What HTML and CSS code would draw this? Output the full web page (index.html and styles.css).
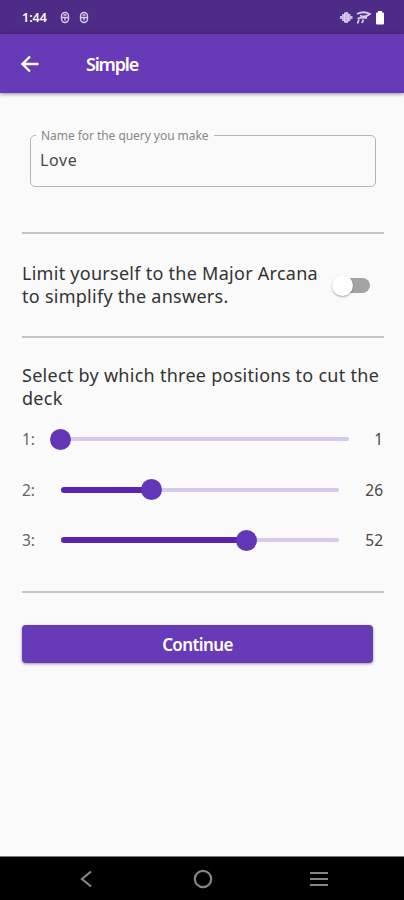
FILE: index.html
```html
<!DOCTYPE html>
<html lang="en">
<head>
<meta charset="utf-8">
<title>Simple</title>
<link rel="stylesheet" href="styles.css">
</head>
<body>
<div class="status">
  <span class="time">1:44</span>
  <svg class="bug" width="10" height="13" viewBox="0 0 10 13"><path d="M1.500 6.500V5a3.500 3.500 0 0 1 7 0V8a3.500 3.500 0 0 1-7 0V6.500h7M5 7v2.500M3.500 4h3"/></svg>
  <svg class="bug" width="10" height="13" viewBox="0 0 10 13"><path d="M1.500 6.500V5a3.500 3.500 0 0 1 7 0V8a3.500 3.500 0 0 1-7 0V6.500h7M5 7v2.500M3.500 4h3"/></svg>
  <svg class="system" width="46" height="17" viewBox="0 0 46 17">
    <path d="M1 7h2V5h2.500V3h3.500v2h2.500v2h2v3h-2v2H9v2H5.500v-2H3v-2H1z" fill="#c5b6dc"/>
    <path d="M5.500 4v9M9 4v9" stroke="#e0d7ec"/>
    <path d="M18 5q6.500-3.500 13 0q-5 4-10 1.500M18.500 9.500q5-1.500 9.500-.5M20 10.500l-1.500 4M24.500 10.500l-1.500 3.500" fill="none" stroke="#d8cde8" stroke-width="1.800"/>
    <path d="M39 2h4v1.500h1q1 0 1 1v10q0 1-1 1h-6q-1 0-1-1v-10q0-1 1-1h1z" fill="#fff"/>
  </svg>
</div>
<header class="appbar">
  <svg width="18" height="18" viewBox="0 0 18 18"><path d="M17.500 9H2M9 1.500L1.500 9L9 16.500"/></svg>
  <h1>Simple</h1>
</header>
<main>
  <fieldset class="field">
    <legend>Name for the query you make</legend>
    <div class="value">Love</div>
  </fieldset>
  <hr>
  <section class="limit">
    <p>Limit yourself to the Major Arcana<br>to simplify the answers.</p>
    <div class="switch"><i></i></div>
  </section>
  <hr>
  <section class="cuts">
    <p>Select by which three positions to cut the<br>deck</p>
    <div class="row"><span class="num">1:</span><div class="track first"><i class="fill" style="width:0%"></i><i class="knob" style="left:0%"></i></div><span class="val">1</span></div>
    <div class="row"><span class="num">2:</span><div class="track"><i class="fill" style="width:32.900%"></i><i class="knob" style="left:32.900%"></i></div><span class="val">26</span></div>
    <div class="row"><span class="num">3:</span><div class="track"><i class="fill" style="width:67%"></i><i class="knob" style="left:67%"></i></div><span class="val">52</span></div>
  </section>
  <hr>
  <button>Continue</button>
</main>
<nav>
  <svg width="12" height="18" viewBox="0 0 12 18"><path d="M11 1.500L2 9l9 7.500"/></svg>
  <svg class="home" width="20" height="20" viewBox="0 0 20 20"><circle cx="10" cy="10" r="8.200"/></svg>
  <svg width="20" height="18" viewBox="0 0 20 18"><path d="M1 3h18M1 9h18M1 15h18"/></svg>
</nav>
</body>
</html>
```
FILE: styles.css
```css
* { box-sizing: border-box; }
body {
  margin: 0;
  height: 900px;
  display: flex;
  flex-direction: column;
  background: #fafafa;
  color: #484848;
  font-family: "Noto Sans", sans-serif;
  overflow: hidden;
}
.status {
  height: 34px;
  flex: none;
  display: flex;
  align-items: center;
  padding: 0 19px 0 22px;
  background: #4d2b87;
  color: #fff;
}
.time { width: 38px; font-size: 12.5px; font-weight: 600; }
.bug { margin-right: 9px; fill: none; stroke: #d8cde8; stroke-width: 1.400; }
.system { margin-left: auto; }
.appbar {
  height: 59px;
  flex: none;
  display: flex;
  align-items: center;
  padding-left: 21px;
  background: #673ab7;
  color: #fff;
  box-shadow: 0 1px 4px rgba(0, 0, 0, .45);
}
.appbar svg { fill: none; stroke: #fff; stroke-width: 2.300; }
.appbar h1 { margin: 0 0 0 47px; font-size: 18px; font-weight: 600; letter-spacing: -1.200px; }
main { flex: 1; padding: 34px 20px 0 22px; }
hr { height: 2px; margin: 0; border: 0; background: #c4c4c4; }
.field {
  width: 346px;
  height: 60px;
  margin: 0 0 45px 8px;
  padding: 0 0 0 9px;
  border: 1px solid #b4b4b4;
  border-radius: 5px;
}
legend { margin-left: -4px; padding: 0 5px; font-size: 12px; line-height: 17px; letter-spacing: -.05px; color: #888; white-space: nowrap; }
.value { font-size: 16px; line-height: 22px; margin-top: 5px; letter-spacing: .6px; }
p { margin: 0; font-size: 18px; line-height: 23px; color: #333; white-space: nowrap; letter-spacing: .27px; }
.limit { height: 102px; display: flex; padding-top: 28px; }
.limit p { width: 311px; }
.switch { position: relative; width: 37px; height: 15px; margin-top: 16px; border-radius: 8px; background: #a3a3a3; }
.switch i {
  position: absolute;
  left: -1px;
  top: -3px;
  width: 21px;
  height: 21px;
  border-radius: 50%;
  background: #fff;
  box-shadow: 0 1px 2px rgba(0, 0, 0, .35);
}
.cuts { height: 253px; padding-top: 26px; }
.row { height: 50.500px; display: flex; align-items: center; font-size: 15.500px; }
.cuts p { margin-bottom: 4px; }
.num { width: 38.500px; color: #666; }
.track { position: relative; width: 278px; height: 4px; border-radius: 2px; background: #d5c9ed; }
.track.first { width: 288px; }
.fill { position: absolute; left: 0; top: -1px; height: 6px; border-radius: 3px; background: #5925ac; }
.knob { position: absolute; top: -8.500px; width: 21px; height: 21px; margin-left: -10.500px; border-radius: 50%; background: #6236b7; }
.val { margin: 0 1px 0 auto; }
button {
  display: block;
  width: 351px;
  height: 38px;
  margin-top: 32px;
  padding: 0;
  border: 0;
  border-radius: 4px;
  background: #673ab7;
  color: #fff;
  font: 600 17px "Noto Sans", sans-serif;
  letter-spacing: -.6px;
  box-shadow: 0 1px 3px rgba(0, 0, 0, .4);
}
nav {
  height: 44px;
  flex: none;
  display: flex;
  justify-content: space-between;
  align-items: center;
  padding: 0 75px 0 80px;
  border-top: 1px solid #777;
  background: #000;
}
nav svg { fill: none; stroke: #858585; stroke-width: 2.200; }
nav .home { margin-left: 4px; }
```
